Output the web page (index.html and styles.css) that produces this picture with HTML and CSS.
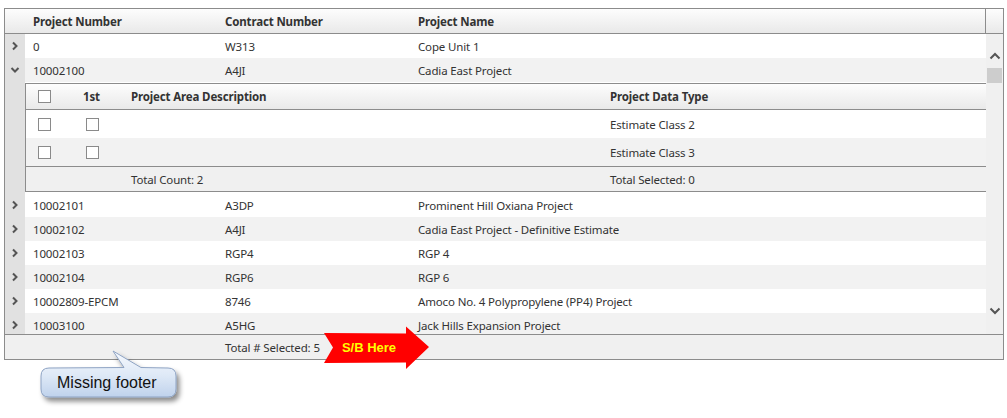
FILE: index.html
```html
<!DOCTYPE html>
<html lang="en">
<head>
    <meta charset="UTF-8">
    <title>Project Grid</title>
    <link rel="stylesheet" href="styles.css">
</head>
<body>
<div class="page">
    <div class="grid">
        <div class="grid-header">
            <div class="ind"></div>
            <div class="col c1">Project Number</div>
            <div class="col c2">Contract Number</div>
            <div class="col c3">Project Name</div>
            <div class="sb-head"></div>
        </div>
        <div class="grid-body">
            <div class="rows">
                <div class="row">
                    <div class="ind"><svg class="chev" width="8" height="10" viewBox="0 0 8 10"><path d="M2 1.5 L5.5 5 L2 8.5"/></svg></div>
                    <div class="col c1">0</div>
                    <div class="col c2">W313</div>
                    <div class="col c3">Cope Unit 1</div>
                </div>
                <div class="row alt">
                    <div class="ind"><svg class="chev" width="10" height="8" viewBox="0 0 10 8"><path d="M1.5 2 L5 5.5 L8.5 2"/></svg></div>
                    <div class="col c1">10002100</div>
                    <div class="col c2">A4JI</div>
                    <div class="col c3">Cadia East Project</div>
                </div>
                <div class="detail">
                    <div class="ind"></div>
                    <div class="sub">
                        <div class="sub-header">
                            <div class="s1"><span class="box"></span></div>
                            <div class="s2">1st</div>
                            <div class="s3">Project Area Description</div>
                            <div class="s4">Project Data Type</div>
                        </div>
                        <div class="sub-row">
                            <div class="s1"><span class="box"></span></div>
                            <div class="s2"><span class="box shift"></span></div>
                            <div class="s3"></div>
                            <div class="s4">Estimate Class 2</div>
                        </div>
                        <div class="sub-row alt">
                            <div class="s1"><span class="box"></span></div>
                            <div class="s2"><span class="box shift"></span></div>
                            <div class="s3"></div>
                            <div class="s4">Estimate Class 3</div>
                        </div>
                        <div class="sub-footer">
                            <div class="s1"></div>
                            <div class="s2"></div>
                            <div class="s3">Total Count: 2</div>
                            <div class="s4">Total Selected: 0</div>
                        </div>
                    </div>
                </div>
                <div class="row">
                    <div class="ind"><svg class="chev" width="8" height="10" viewBox="0 0 8 10"><path d="M2 1.5 L5.5 5 L2 8.5"/></svg></div>
                    <div class="col c1">10002101</div>
                    <div class="col c2">A3DP</div>
                    <div class="col c3">Prominent Hill Oxiana Project</div>
                </div>
                <div class="row alt">
                    <div class="ind"><svg class="chev" width="8" height="10" viewBox="0 0 8 10"><path d="M2 1.5 L5.5 5 L2 8.5"/></svg></div>
                    <div class="col c1">10002102</div>
                    <div class="col c2">A4JI</div>
                    <div class="col c3">Cadia East Project - Definitive Estimate</div>
                </div>
                <div class="row">
                    <div class="ind"><svg class="chev" width="8" height="10" viewBox="0 0 8 10"><path d="M2 1.5 L5.5 5 L2 8.5"/></svg></div>
                    <div class="col c1">10002103</div>
                    <div class="col c2">RGP4</div>
                    <div class="col c3">RGP 4</div>
                </div>
                <div class="row alt">
                    <div class="ind"><svg class="chev" width="8" height="10" viewBox="0 0 8 10"><path d="M2 1.5 L5.5 5 L2 8.5"/></svg></div>
                    <div class="col c1">10002104</div>
                    <div class="col c2">RGP6</div>
                    <div class="col c3">RGP 6</div>
                </div>
                <div class="row">
                    <div class="ind"><svg class="chev" width="8" height="10" viewBox="0 0 8 10"><path d="M2 1.5 L5.5 5 L2 8.5"/></svg></div>
                    <div class="col c1">10002809-EPCM</div>
                    <div class="col c2">8746</div>
                    <div class="col c3">Amoco No. 4 Polypropylene (PP4) Project</div>
                </div>
                <div class="row alt">
                    <div class="ind"><svg class="chev" width="8" height="10" viewBox="0 0 8 10"><path d="M2 1.5 L5.5 5 L2 8.5"/></svg></div>
                    <div class="col c1">10003100</div>
                    <div class="col c2">A5HG</div>
                    <div class="col c3">Jack Hills Expansion Project</div>
                </div>
            </div>
            <div class="scrollbar">
                <div class="sb-btn"><svg class="sb-chev" width="12" height="8" viewBox="0 0 12 8"><path d="M1.5 6.5 L6 2 L10.5 6.5"/></svg></div>
                <div class="sb-thumb"></div>
                <div class="sb-btn sb-down"><svg class="sb-chev" width="12" height="8" viewBox="0 0 12 8"><path d="M1.5 1.5 L6 6 L10.5 1.5"/></svg></div>
            </div>
        </div>
        <div class="grid-footer">
            <div class="ind"></div>
            <div class="col c1"></div>
            <div class="col c2">Total # Selected: 5</div>
        </div>
    </div>

    <!-- annotations -->
    <svg class="note-arrow" width="115" height="55" viewBox="0 0 115 55">
        <polygon points="4,13 86,13.5 86,6.5 109,27 86,49 86,42.5 4,43 13,27.5" fill="#ff0000"/>
        <text x="49" y="31.5" text-anchor="middle">S/B Here</text>
    </svg>
    <svg class="callout" width="160" height="65" viewBox="0 0 160 65">
        <defs>
            <linearGradient id="calloutFill" x1="0" y1="0" x2="0" y2="1">
                <stop offset="0" stop-color="#f6f9fe"/>
                <stop offset="0.55" stop-color="#dde8f6"/>
                <stop offset="1" stop-color="#bfd2ec"/>
            </linearGradient>
            <filter id="calloutShadow" x="-10%" y="-20%" width="130%" height="160%">
                <feDropShadow dx="3" dy="4" stdDeviation="2.5" flood-color="#000" flood-opacity="0.45"/>
            </filter>
        </defs>
        <path d="M14 23 L89 22.5 L78 6 L106 22.5 L133 23 Q141 23 141 31 L141 44 Q141 52 133 52 L14 52 Q6 52 6 44 L6 31 Q6 23 14 23 Z" fill="url(#calloutFill)" stroke="#8ea3c3" stroke-width="1" filter="url(#calloutShadow)"/>
        <text x="22" y="43">Missing footer</text>
    </svg>
</div>
</body>
</html>
```

FILE: styles.css
```css
body {
    margin: 0;
    background: #fff;
    font-family: "Noto Sans", "Open Sans", sans-serif;
    font-size: 11.5px;
    letter-spacing: -0.15px;
    color: #333;
}
.page {
    position: relative;
    width: 1007px;
    height: 418px;
    padding-top: 8px;
    box-sizing: border-box;
}
.grid {
    margin-left: 4px;
    width: 1000px;
    box-sizing: border-box;
    border: 1px solid #8c8c8c;
}
.ind {
    flex: none;
    width: 20px;
    display: flex;
    align-items: center;
    justify-content: center;
}
.col {
    flex: none;
    box-sizing: border-box;
    padding-left: 8px;
    white-space: nowrap;
}
.c1 { width: 192px; }
.c2 { width: 193px; }
.c3 { flex: 1; }

.grid-header {
    display: flex;
    align-items: center;
    height: 24px;
    border-bottom: 1px solid #8c8c8c;
    background: linear-gradient(#fdfdfd, #e9e9e9);
    font-weight: bold;
}
.sb-head {
    align-self: stretch;
    width: 17px;
    border-left: 1px solid #8c8c8c;
}

.grid-body {
    display: flex;
    height: 300px;
    overflow: hidden;
}
.rows {
    flex: 1;
    overflow: hidden;
}
.row {
    display: flex;
    align-items: center;
    height: 24px;
    background: #fff;
}
.row.alt { background: #f2f2f2; }
.row .ind, .detail .ind {
    align-self: stretch;
    background: #e1e1e1;
}
.chev path, .sb-chev path {
    fill: none;
    stroke: #555;
    stroke-width: 2;
}

.detail {
    display: flex;
    padding: 1px 0;
    background: #fff;
}
.detail .ind { margin: -1px 0; }
.sub {
    flex: 1;
    border: 1px solid #8c8c8c;
    border-right: none;
}
.sub-header, .sub-row, .sub-footer {
    display: flex;
    align-items: center;
}
.sub-header {
    height: 25px;
    border-bottom: 1px solid #8c8c8c;
    background: linear-gradient(#fdfdfd, #e9e9e9);
    font-weight: bold;
}
.sub-row {
    height: 28px;
    background: #fff;
}
.sub-row.alt { background: #f2f2f2; }
.sub-footer {
    height: 24px;
    border-top: 1px solid #8c8c8c;
    background: #f0f0f0;
}
.s1 {
    width: 49px;
    padding-left: 12px;
    box-sizing: border-box;
    display: flex;
}
.s2 {
    width: 48px;
    padding-left: 8px;
    box-sizing: border-box;
    display: flex;
}
.s3 {
    width: 479px;
    padding-left: 8px;
    box-sizing: border-box;
}
.s4 {
    flex: 1;
    padding-left: 8px;
}
.box {
    display: block;
    width: 13px;
    height: 13px;
    box-sizing: border-box;
    border: 1px solid #8a8a8a;
    background: #fff;
}
.box.shift { margin-left: 3px; }

.scrollbar {
    flex: none;
    width: 17px;
    display: flex;
    flex-direction: column;
    align-items: center;
    padding: 12px 0 13px;
    box-sizing: border-box;
    background: #f0f0f0;
}
.sb-btn {
    height: 20px;
    display: flex;
    align-items: center;
    justify-content: center;
}
.sb-thumb {
    margin-top: 2px;
    width: 15px;
    height: 15px;
    background: #cdcdcd;
}
.sb-down { margin-top: auto; }

.grid-footer {
    display: flex;
    align-items: center;
    height: 24px;
    border-top: 1px solid #8c8c8c;
    background: #f0f0f0;
}

.note-arrow {
    position: absolute;
    left: 320px;
    top: 320px;
}
.note-arrow text {
    font-family: "Liberation Sans", Arial, sans-serif;
    font-size: 13px;
    font-weight: bold;
    letter-spacing: 0;
    fill: #ffff00;
}
.callout {
    position: absolute;
    left: 35px;
    top: 345px;
}
.callout text {
    font-family: "Liberation Sans", Arial, sans-serif;
    font-size: 16px;
    letter-spacing: 0;
    fill: #111;
}
```
